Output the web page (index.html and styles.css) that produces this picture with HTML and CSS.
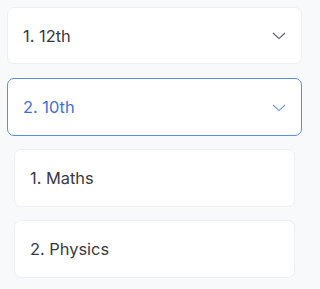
FILE: index.html
```html
<!DOCTYPE html>
<html>
<head>
<meta charset="utf-8">
<link rel="stylesheet" href="styles.css">
</head>
<body>
<div class="list">
  <div class="item">
    <span class="label">1. 12th</span>
    <svg class="chev" width="14" height="8" viewBox="0 0 14 8"><path d="M1 1 L7 6.6 L13 1" fill="none" stroke="currentColor" stroke-width="1.1"/></svg>
  </div>
  <div class="item active">
    <span class="label">2. 10th</span>
    <svg class="chev" width="14" height="8" viewBox="0 0 14 8"><path d="M1 1 L7 6.6 L13 1" fill="none" stroke="currentColor" stroke-width="1.1"/></svg>
  </div>
  <div class="sub">
    <div class="subitem">1. Maths</div>
    <div class="subitem">2. Physics</div>
  </div>
</div>
</body>
</html>
```
FILE: styles.css
```css
html, body {
  margin: 0;
  padding: 0;
  background: #f8f9fa;
  font-family: Inter, "Noto Sans", sans-serif;
}
body {
  width: 309px;
}
.list {
  padding: 7px;
  display: flex;
  flex-direction: column;
  gap: 14px;
}
.item {
  height: 57px;
  box-sizing: border-box;
  background: #fff;
  border: 1px solid #eeeff1;
  border-radius: 7px;
  display: flex;
  align-items: center;
  justify-content: space-between;
  padding: 0 15px 0 15px;
  color: #383942;
  font-size: 16.4px;
}
.item.active {
  height: 58px;
  border-color: #5b8ee3;
  color: #3d6fd6;
}
.chev {
  color: #55565e;
  margin-top: 1px;
}
.item.active .chev {
  color: #6d97e0;
}
.sub {
  padding: 0 7px;
  display: flex;
  flex-direction: column;
  gap: 13px;
  margin-top: -1px;
}
.subitem {
  height: 58px;
  box-sizing: border-box;
  background: #fff;
  border: 1px solid #eeeff1;
  border-radius: 7px;
  display: flex;
  align-items: center;
  padding: 0 15px;
  color: #383942;
  font-size: 16.4px;
}
```
